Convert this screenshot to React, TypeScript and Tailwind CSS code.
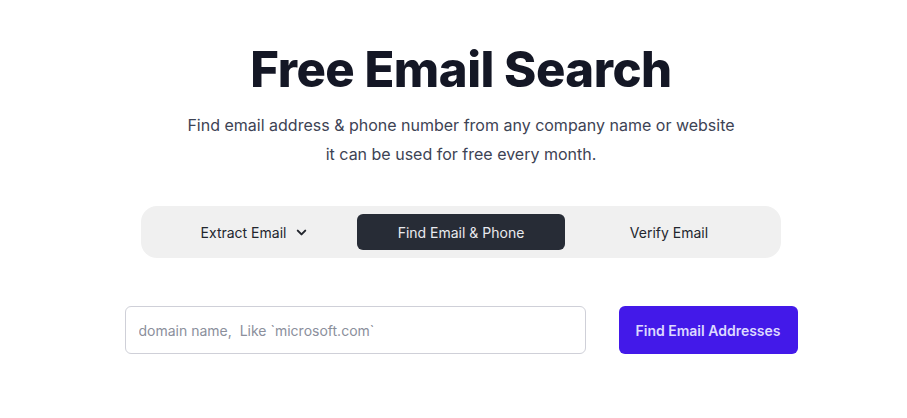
import { ChevronDown } from 'lucide-react';

const tabs = ['Extract Email', 'Find Email & Phone', 'Verify Email'];

const App = () => {
  return (
    <div className="min-h-[418px] bg-white font-['Inter','Liberation_Sans',sans-serif]">
      <div className="pl-[15px] flex flex-col items-center pt-[38px]">
        <h1 className="text-[49px] leading-[64px] font-extrabold tracking-[-0.5px] text-[#141725]">
          Free Email Search
        </h1>
        <p className="mt-[9px] text-center text-[16px] leading-[29px] text-[#3d4354]">
          Find email address &amp; phone number from any company name or website
          <br />
          it can be used for free every month.
        </p>

        <div className="mt-[37px] w-[640px] h-[52px] rounded-[16px] bg-[#f0f0f0] p-[8px] grid grid-cols-3">
          {tabs.map((t, i) => (
            <button
              key={t}
              className={
                i === 1
                  ? 'h-[36px] rounded-[6px] bg-[#272c36] text-[14px] text-[#e9eaee] flex items-center justify-center'
                  : i === 0
                    ? 'h-[36px] rounded-[6px] text-[14px] text-[#23262e] flex items-center justify-center gap-[8px] pl-[4px]'
                    : 'h-[36px] rounded-[6px] text-[14px] text-[#23262e] flex items-center justify-center'
              }
            >
              {t}
              {i === 0 && <ChevronDown className="w-[15px] h-[15px]" strokeWidth={3.2} />}
            </button>
          ))}
        </div>

        <div className="mt-[48px] flex items-center gap-[33px]">
          <input
            className="w-[461px] h-[48px] rounded-[6px] border border-[#cfd0d8] px-[13px] text-[14px] text-[#23262e] placeholder:text-[#8b8f9c] outline-none"
            placeholder="domain name,  Like `microsoft.com`"
          />
          <button className="w-[179px] h-[48px] rounded-[6px] bg-[#4319e9] text-[14px] font-semibold text-[#ddd9ff]">
            Find Email Addresses
          </button>
        </div>
      </div>
    </div>
  );
};

export default App;
